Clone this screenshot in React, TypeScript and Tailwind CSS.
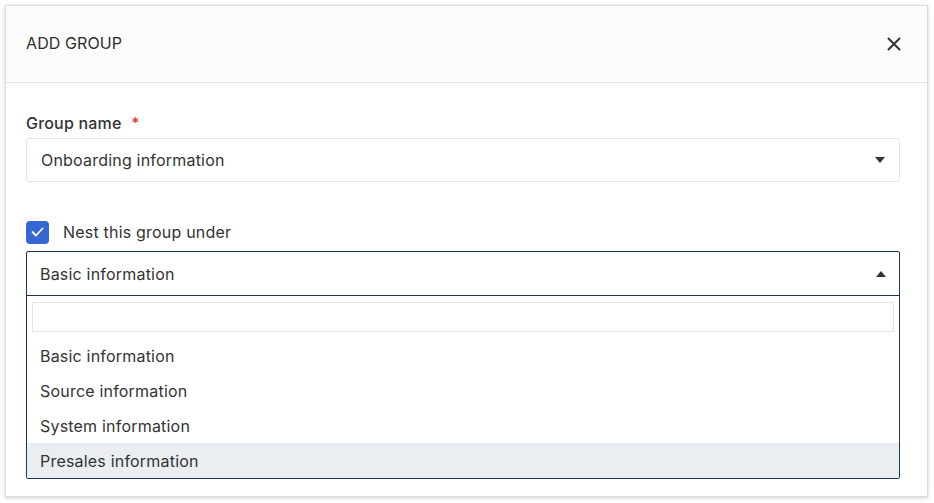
import React from "react";

const options = [
  "Basic information",
  "Source information",
  "System information",
  "Presales information",
];

function Caret({ up }: { up?: boolean }) {
  return (
    <svg width="10" height="6" viewBox="0 0 10 6" className="text-[#333]">
      {up ? (
        <path d="M0 6 L5 0 L10 6 Z" fill="currentColor" />
      ) : (
        <path d="M0 0 L10 0 L5 6 Z" fill="currentColor" />
      )}
    </svg>
  );
}

export default function App() {
  return (
    <div
      className="w-[934px] h-[503px] bg-white p-[5px] text-[#333]"
      style={{ fontFamily: "Inter, 'Liberation Sans', sans-serif" }}
    >
      <div className="w-[923px] h-[492px] bg-white border border-[#dcdcdc] shadow-[0_1px_4px_rgba(0,0,0,0.18)] flex flex-col">
        {/* header */}
        <div className="h-[77px] shrink-0 bg-[#fcfcfc] border-b border-[#dde1e6] flex items-center justify-between pl-[20px] pr-[26px]">
          <div className="text-[16px] tracking-[0.1px] text-[#2e2e2e] pb-[2px]">ADD GROUP</div>
          <button className="text-[#333]">
            <svg width="14" height="14" viewBox="0 0 14 14">
              <path d="M1.5 1.5 L12.5 12.5 M12.5 1.5 L1.5 12.5" stroke="currentColor" strokeWidth="2" strokeLinecap="round" />
            </svg>
          </button>
        </div>

        {/* body */}
        <div className="pl-[20px] pr-[27px] pt-[30px]">
          <div className="flex items-center gap-[10px] text-[16px] tracking-[0.2px] font-medium text-[#333] h-[20px]">
            Group name <span className="text-[#e0343a] text-[15px]">*</span>
          </div>
          <div className="mt-[5px] h-[44px] border border-[#e4e4e4] rounded-[3px] flex items-center justify-between pl-[14px] pr-[14px] text-[16px] tracking-[0.2px] text-[#333]">
            <span>Onboarding information</span>
            <Caret />
          </div>

          <div className="mt-[38px] flex items-center gap-[14px] h-[24px]">
            <div className="w-[23px] h-[23px] rounded-[4px] bg-[#3568d4] flex items-center justify-center">
              <svg width="13" height="10" viewBox="0 0 13 10">
                <path d="M1.5 5 L5 8.5 L11.5 1.5" fill="none" stroke="white" strokeWidth="1.8" strokeLinecap="round" strokeLinejoin="round" />
              </svg>
            </div>
            <span className="text-[16px] tracking-[0.2px] text-[#333]">Nest this group under</span>
          </div>

          <div className="mt-[7px] border border-[#1d3550] rounded-[2px]">
            <div className="h-[44px] border-b border-[#1d3550] flex items-center justify-between pl-[13px] pr-[13px] text-[16px] tracking-[0.2px] text-[#333]">
              <span>Basic information</span>
              <Caret up />
            </div>
            <div className="px-[5px] pt-[6px]">
              <div className="h-[30px] border border-[#e4e4e4]" />
            </div>
            <div className="pt-[6px]">
              {options.map((o, i) => (
                <div
                  key={o}
                  className={`h-[35px] flex items-center pl-[13px] text-[16px] tracking-[0.2px] text-[#333] ${
                    i === 3 ? "bg-[#eaeef2]" : ""
                  }`}
                >
                  {o}
                </div>
              ))}
            </div>
          </div>
        </div>
      </div>
    </div>
  );
}
